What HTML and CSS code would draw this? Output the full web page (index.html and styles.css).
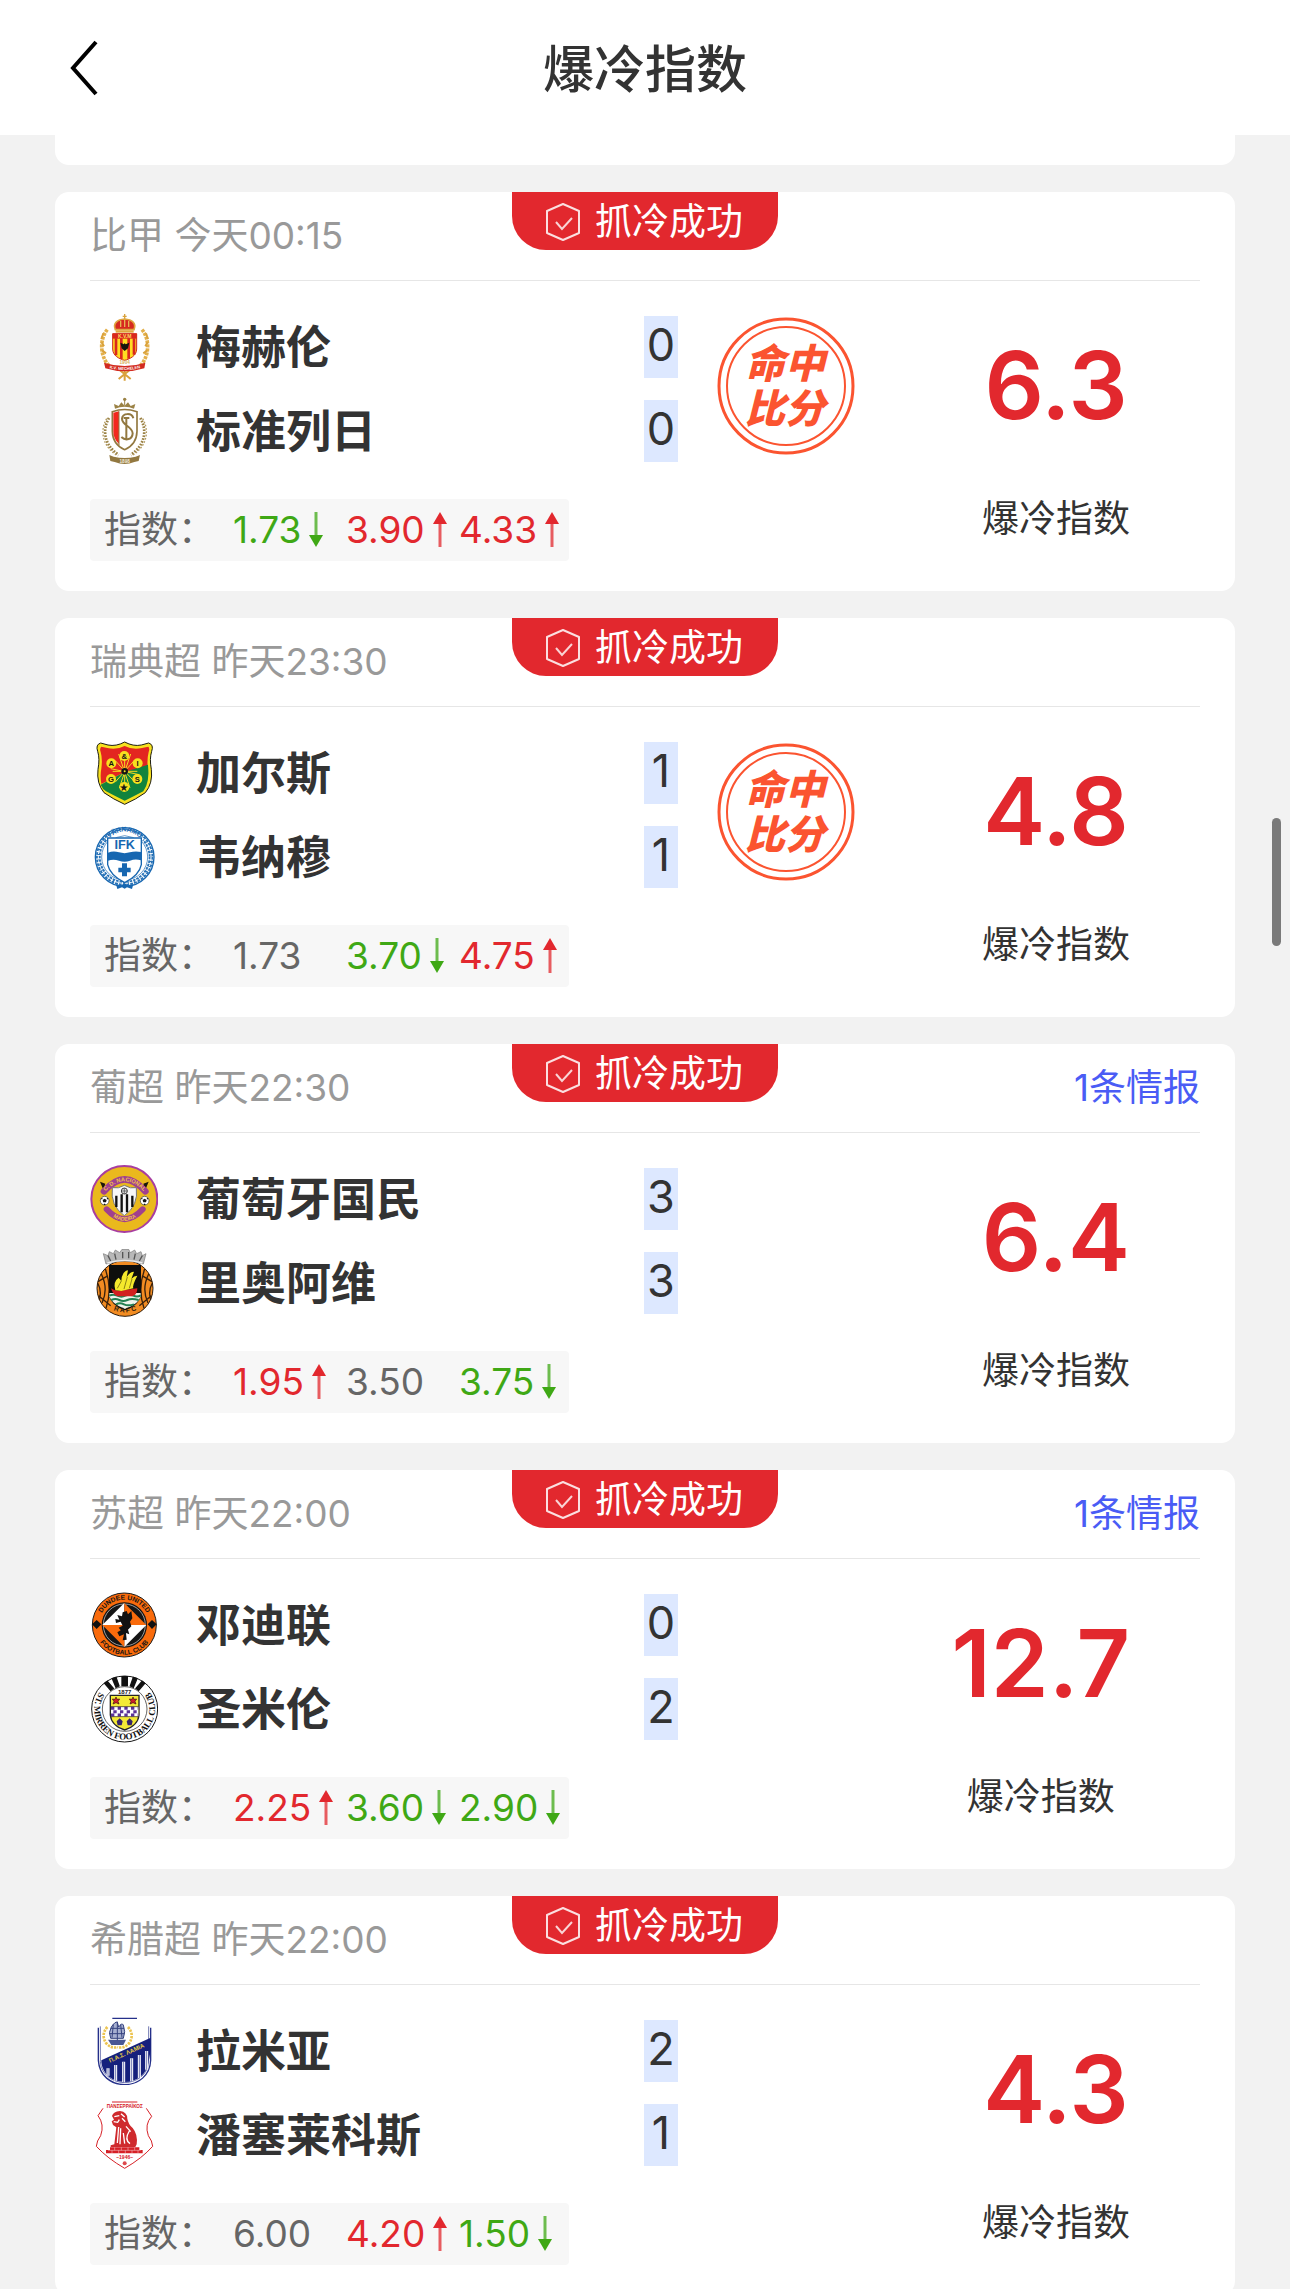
FILE: index.html
```html
<!DOCTYPE html>
<html lang="zh-CN">
<head>
<meta charset="utf-8">
<meta name="viewport" content="width=device-width, initial-scale=1">
<title>爆冷指数</title>
<link rel="stylesheet" href="styles.css">
</head>
<body>
<svg class="sprite" aria-hidden="true">
  <symbol id="shield-check" viewBox="0 0 36 40">
    <path d="M18 2 34 9V31L18 38 2 31V9Z" fill="none" stroke="#fff" stroke-opacity=".85" stroke-width="2" stroke-linejoin="round"/>
    <path d="M11 20 17 27 27 16" fill="none" stroke="#fff" stroke-opacity=".8" stroke-width="2"/>
  </symbol>
  <symbol id="arrow-up" viewBox="0 0 16 36">
    <path d="M8 10V35" stroke="#e2282e" stroke-opacity=".75" stroke-width="3"/><path d="M8 0 15 12H1Z" fill="#e2282e"/>
  </symbol>
  <symbol id="arrow-down" viewBox="0 0 16 36">
    <path d="M8 0V26" stroke="#3fa815" stroke-opacity=".75" stroke-width="3"/><path d="M8 35 15 23H1Z" fill="#3fa815"/>
  </symbol>
  <symbol id="stamp" viewBox="0 0 138 138">
    <circle cx="69" cy="69" r="67" fill="none" stroke="#fb5430" stroke-width="3"/>
    <circle cx="69" cy="69" r="59" fill="none" stroke="#fb5430" stroke-width="2"/>
    <text class="stamp-text" x="68" y="61">命中</text>
    <text class="stamp-text" x="68" y="106">比分</text>
  </symbol>
</svg>

<header class="topbar">
  <button class="back" type="button" aria-label="返回">
    <svg width="32" height="56" viewBox="0 0 32 56"><path d="M28 2 5 28 28 54" fill="none" stroke="#000" stroke-width="4"/></svg>
  </button>
  <h1 class="title">爆冷指数</h1>
</header>

<main class="list">
  <div class="card card-tail"></div>

  <article class="card">
    <div class="card-head"><span>比甲 今天00:15</span></div>
    <div class="badge"><svg width="36" height="40"><use href="#shield-check"/></svg>抓冷成功</div>
    <div class="card-body">
      <div class="match">
        <div class="team">
          <svg class="logo" viewBox="30 42 204 204">
            <g fill="none" stroke="#e3b04b" stroke-width="11" stroke-dasharray="9 3"><path d="M82 92C58 120 58 175 92 205"/><path d="M186 92C210 120 210 175 176 205"/></g>
            <path d="M70 103 64 120M65 130 72 142M66 154 78 163M198 103 204 120M203 130 196 142M202 154 190 163" stroke="#d9a23c" stroke-width="6"/>
            <path d="M116 240 150 212M152 240 118 212M134 214V245" stroke="#d9a23c" stroke-width="6"/>
            <path d="M134 45V62M128 52H140" stroke="#d9a23c" stroke-width="4"/>
            <path d="M106 92C98 72 112 62 134 60C156 62 170 72 162 92Z" fill="#d62a1f" stroke="#dfa640" stroke-width="5"/>
            <path d="M122 66V84M134 62V84M146 66V84" stroke="#e8b552" stroke-width="4"/>
            <path d="M107 94H161V101H107Z" fill="#e0a840"/>
            <path d="M98 104H170V150C170 170 150 180 134 184C118 180 98 170 98 150Z" fill="#ffdd22" stroke="#cf2b20" stroke-width="3"/>
            <path d="M108 118V169M124 118V180M146 118V179M162 118V167" stroke="#d9281e" stroke-width="8"/>
            <path d="M98 104H170V119H98Z" fill="#d9281e"/><text class="tiny" x="134" y="117" font-size="15" fill="#ffdf60">K.V.M</text>
            <path d="M121 131 132 136 134 132 137 136 148 131 144 148 134 156 125 148Z" fill="#16150f"/>
            <text class="tiny" x="134" y="195" font-size="14" fill="#d8b060">1904</text>
            <path d="M72 191Q134 211 196 191L193 208Q134 226 76 208Z" fill="#d22b20"/>
            <path id="mechBand" d="M75 204Q134 222 194 204" fill="none"/><text class="tiny" font-size="12" fill="#fff"><textPath href="#mechBand" startOffset="50%">K.V. MECHELEN</textPath></text>
          </svg>
          <h2 class="name">梅赫伦</h2><span class="score">0</span>
        </div>
        <div class="team">
          <svg class="logo" viewBox="30 297 204 204">
            <g fill="none" stroke="#9b8245" stroke-width="8" stroke-dasharray="5 4"><path d="M87 360C64 400 76 445 116 470"/><path d="M181 360C204 400 192 445 152 470"/></g>
            <g fill="none" stroke="#b29a60" stroke-width="4" stroke-dasharray="5 5"><path d="M80 362C56 404 72 450 114 474"/><path d="M188 362C212 404 196 450 154 474"/></g>
            <path d="M97 341Q134 328 171 341V400Q170 440 134 455Q98 440 97 400Z" fill="#fff" stroke="#927840" stroke-width="5"/>
            <path d="M100 344 117 340V438Q100 424 100 400Z" fill="#f3281e"/>
            <path d="M117 340V442" stroke="#927840" stroke-width="3"/>
            <path d="M160 361C156 344 128 344 126 362C126 382 158 386 158 406C157 424 138 430 124 417M139 358V422M131 360H148" fill="none" stroke="#927840" stroke-width="6"/>
            <path d="M105 332 102 318 116 324 124 313 134 323 144 313 152 324 166 318 162 332Q134 321 105 332Z" fill="#9b8245"/><circle cx="134" cy="304" r="5" fill="#9b8245"/><path d="M134 306V323" stroke="#9b8245" stroke-width="3"/>
            <path d="M88 471 101 476Q134 484 167 476L180 471 176 489 163 492Q134 504 104 492L91 489Z" fill="#927840"/>
            <text class="tiny" x="134" y="496" font-size="14" fill="#f4edda">1898</text>
          </svg>
          <h2 class="name">标准列日</h2><span class="score">0</span>
        </div>
        <dl class="odds"><dt>指数：</dt>
          <dd class="down">1.73<svg width="16" height="36"><use href="#arrow-down"/></svg></dd>
          <dd class="up">3.90<svg width="16" height="36"><use href="#arrow-up"/></svg></dd>
          <dd class="up">4.33<svg width="16" height="36"><use href="#arrow-up"/></svg></dd></dl>
      </div>
      <svg class="stamp" role="img" aria-label="命中比分"><use href="#stamp"/></svg>
      <div class="rating"><strong>6.3</strong><span>爆冷指数</span></div>
    </div>
  </article>

  <article class="card">
    <div class="card-head"><span>瑞典超 昨天23:30</span></div>
    <div class="badge"><svg width="36" height="40"><use href="#shield-check"/></svg>抓冷成功</div>
    <div class="card-body">
      <div class="match">
        <div class="team">
          <svg class="logo" viewBox="30 31 204 204">
            <path d="M134 40Q160 54 184 49L206 43Q222 48 215 68Q208 90 214 122Q219 164 196 192Q168 212 134 227Q100 212 72 192Q49 164 54 122Q60 90 53 68Q46 48 62 43L84 49Q108 54 134 40Z" fill="#f7e11f" stroke="#1c1c10" stroke-width="3"/>
            <path d="M134 52Q160 65 186 58L205 54Q210 60 206 70Q200 94 204 124L134 130 64 166Q60 140 64 120Q68 90 62 70Q58 60 64 54L82 58Q108 65 134 52Z" fill="#e32620"/>
            <path d="M204 108L134 130 62 168Q68 182 78 188Q108 204 134 216Q160 204 190 188Q210 160 204 108Z" fill="#11833d"/>
            <path d="M134 94V170M98 128H172M106 96 164 160M164 94 106 160M92 120 178 138M116 76 150 178M152 76 118 178" stroke="#f3d822" stroke-width="3"/>
            <g fill="#f7e11f"><circle cx="133" cy="82" r="15"/><circle cx="94" cy="104" r="15"/><circle cx="173" cy="104" r="15"/><circle cx="93" cy="151" r="15"/><circle cx="172" cy="151" r="15"/><circle cx="133" cy="175" r="15"/></g>
            <circle cx="134" cy="128" r="10" fill="#151515"/><circle cx="134" cy="128" r="3" fill="#f7e11f"/>
            <g class="tiny" font-size="23" fill="#151515"><text x="133" y="91">&amp;</text><text x="94" y="112">A</text><text x="173" y="112">I</text><text x="93" y="159">G</text><text x="172" y="159">S</text><text x="133" y="184">★</text></g>
          </svg>
          <h2 class="name">加尔斯</h2><span class="score">1</span>
        </div>
        <div class="team">
          <svg class="logo" viewBox="30 283 204 204">
            <circle cx="134" cy="385" r="88" fill="#fff" stroke="#1767b1" stroke-width="4"/><circle cx="134" cy="385" r="79" fill="none" stroke="#2a74b8" stroke-width="14" stroke-dasharray="8 3"/><circle cx="134" cy="385" r="79" fill="none" stroke="#fff" stroke-width="3" stroke-dasharray="12 4"/><circle cx="134" cy="385" r="69" fill="none" stroke="#1767b1" stroke-width="2"/>
            <path d="M74 330Q134 275 194 330L182 342Q134 300 86 342Z" fill="#fff" stroke="#1767b1" stroke-width="2"/>
            <path id="varnArc" d="M79 336Q134 281 189 336" fill="none"/><text class="tiny" font-size="20" fill="#1767b1"><textPath href="#varnArc" startOffset="50%">VÄRNAMO</textPath></text>
            <path d="M83 328H184V408Q178 440 134 462Q90 440 83 408Z" fill="#fff" stroke="#1767b1" stroke-width="4"/>
            <text class="tiny" x="134" y="361" font-size="38" fill="#1767b1">IFK</text>
            <path d="M84 372Q100 366 117 371T150 371T183 370V395Q166 390 150 396T117 396T84 396Z" fill="#1767b1"/>
            <path d="M126 404H141V417H152V431H141V443H126V431H115V417H126Z" fill="#1767b1"/>
            <path d="M108 467 124 470 134 464 144 470 160 467 156 481 141 476 134 480 126 476 112 481Z" fill="#1767b1"/>
          </svg>
          <h2 class="name">韦纳穆</h2><span class="score">1</span>
        </div>
        <dl class="odds"><dt>指数：</dt>
          <dd>1.73</dd>
          <dd class="down">3.70<svg width="16" height="36"><use href="#arrow-down"/></svg></dd>
          <dd class="up">4.75<svg width="16" height="36"><use href="#arrow-up"/></svg></dd></dl>
      </div>
      <svg class="stamp" role="img" aria-label="命中比分"><use href="#stamp"/></svg>
      <div class="rating"><strong>4.8</strong><span>爆冷指数</span></div>
    </div>
  </article>

  <article class="card">
    <div class="card-head"><span>葡超 昨天22:30</span><a href="#intel-nacional">1条情报</a></div>
    <div class="badge"><svg width="36" height="40"><use href="#shield-check"/></svg>抓冷成功</div>
    <div class="card-body">
      <div class="match">
        <div class="team">
          <svg class="logo" viewBox="30 48 204 204">
            <circle cx="133" cy="150" r="99" fill="#eab91d" stroke="#a83da0" stroke-width="6"/>
            <path d="M82 118A60 60 0 0 1 184 118M84 186A60 60 0 0 0 182 186" fill="none" stroke="#1b160b" stroke-width="10" stroke-dasharray="9 4"/>
            <path d="M60 98 76 104 70 122ZM206 98 190 104 196 122Z" fill="#1b160b"/>
            <path d="M72 127Q134 55 196 127" fill="none" stroke="#a0408f" stroke-width="20" stroke-linecap="round"/>
            <path d="M80 181Q134 240 188 181" fill="none" stroke="#a0408f" stroke-width="18" stroke-linecap="round"/>
            <path id="nacTopText" d="M72 132Q134 62 196 132" fill="none"/><path id="nacBottomText" d="M80 187Q134 244 188 187" fill="none"/>
            <text class="tiny" font-size="17" fill="#f1c24a"><textPath href="#nacTopText" startOffset="50%">C. D. NACIONAL</textPath></text>
            <text class="tiny" font-size="16" fill="#f1c24a"><textPath href="#nacBottomText" startOffset="50%">MADEIRA</textPath></text>
            <path d="M97 116Q115 120 133 109Q151 120 169 116Q176 170 133 200Q90 170 97 116Z" fill="#f7f7f7" stroke="#777" stroke-width="3"/>
            <path d="M109 140V174M125 136V190M141 136V190M157 140V174" stroke="#111" stroke-width="7"/><circle cx="133" cy="126" r="9" fill="#ddd" stroke="#444" stroke-width="3"/><path d="M133 117V135M124 126H142" stroke="#444" stroke-width="2"/>
            <g fill="#fff" stroke="#333" stroke-width="2"><circle cx="74" cy="155" r="13"/><circle cx="194" cy="155" r="13"/></g>
            <path d="M74 149 80 153 78 160H70L68 153ZM194 149 200 153 198 160H190L188 153ZM63 148 68 146 66 152ZM85 148 80 146 82 152ZM183 148 188 146 186 152ZM205 148 200 146 202 152ZM71 168H77L74 163ZM191 168H197L194 163Z" fill="#111"/>
          </svg>
          <h2 class="name">葡萄牙国民</h2><span class="score">3</span>
        </div>
        <div class="team">
          <svg class="logo" viewBox="30 300 204 204">
            <circle cx="135" cy="418" r="84" fill="#f28c22" stroke="#2c1b0c" stroke-width="3"/>
            <path d="M76 360Q98 420 78 478M64 375Q86 420 66 462M53 402Q66 425 58 452M194 360Q172 420 192 478M206 375Q184 420 204 462M217 402Q204 425 212 452M54 398 84 380M216 398 186 380M56 440 92 470M214 440 178 470" fill="none" stroke="#3a210b" stroke-width="4"/>
            <path d="M87 348H183V440Q176 470 135 484Q94 470 87 440Z" fill="#0e0e0c"/>
            <path d="M88 432H182V442Q176 466 135 480Q96 466 88 442Z" fill="#eef4ec"/>
            <path d="M88 440Q100 434 112 440T136 440T160 440T182 439M94 453Q106 447 118 453T142 453T176 453M108 466Q120 460 132 466T162 466" fill="none" stroke="#238052" stroke-width="6"/>
            <path d="M93 418Q110 430 130 424L172 418Q172 438 156 442H112Q98 436 93 418Z" fill="#d21f20"/>
            <path d="M106 424Q98 398 116 386L124 396Q126 366 144 364L140 384Q150 368 162 368L154 390Q162 380 172 380Q156 410 160 418L124 426Z" fill="#f5e92c"/><path d="M112 418 124 396M132 420 142 384M148 418 156 390" stroke="#584d08" stroke-width="2"/>
            <path id="rioBand" d="M85 476Q135 504 185 476" fill="none"/><text class="tiny" font-size="20" fill="#2c1b0c"><textPath href="#rioBand" startOffset="50%">R A F C</textPath></text>
            <path d="M78 345 70 314 84 320 88 308 100 314 106 303 119 311 126 301H146L151 311 164 303 170 314 183 308 187 320 198 314 190 345Q134 328 78 345Z" fill="#b8b8b8" stroke="#777" stroke-width="2"/>
            <path d="M84 320 92 336M104 314 108 332M128 309V328M146 309V328M166 314 162 332M187 320 178 336" stroke="#555" stroke-width="4"/><path d="M82 342Q134 326 187 342" fill="none" stroke="#eee" stroke-width="4"/>
          </svg>
          <h2 class="name">里奥阿维</h2><span class="score">3</span>
        </div>
        <dl class="odds"><dt>指数：</dt>
          <dd class="up">1.95<svg width="16" height="36"><use href="#arrow-up"/></svg></dd>
          <dd>3.50</dd>
          <dd class="down">3.75<svg width="16" height="36"><use href="#arrow-down"/></svg></dd></dl>
      </div>
      <div class="rating"><strong>6.4</strong><span>爆冷指数</span></div>
    </div>
  </article>

  <article class="card">
    <div class="card-head"><span>苏超 昨天22:00</span><a href="#intel-dundee">1条情报</a></div>
    <div class="badge"><svg width="36" height="40"><use href="#shield-check"/></svg>抓冷成功</div>
    <div class="card-body">
      <div class="match">
        <div class="team">
          <svg class="logo" viewBox="30 34 204 204">
            <circle cx="133" cy="136" r="96" fill="#f96b0c" stroke="#1a1a1a" stroke-width="3"/>
            <circle cx="133" cy="136" r="68" fill="#151515"/><circle cx="133" cy="136" r="63" fill="none" stroke="#ddd" stroke-width="2"/>
            <path d="M133 70V136H67Z" fill="#fff"/><path d="M133 136H199L133 202Z" fill="#fff"/><path d="M67 136H133V202ZM133 70V136H199Z" fill="#f96b0c"/>
            <path d="M36 134 50 121 64 134 50 148ZM203 134 216 121 230 134 216 148Z" fill="#111"/>
            <path d="M128 98 140 94 144 104 154 94 157 116 150 126 154 140 144 150 148 164 138 160 140 180 128 182 132 164 118 170 112 158 122 152 116 144 128 138 122 126 108 130 106 118 118 120 112 106 126 110Z" fill="#111"/>
            <path id="dunTop" d="M57 136A76 76 0 0 1 209 136" fill="none"/><path id="dunBottom" d="M44 136A89 89 0 0 0 222 136" fill="none"/>
            <text class="tiny" font-size="20" fill="#151515"><textPath href="#dunTop" startOffset="50%">DUNDEE UNITED</textPath></text>
            <text class="tiny" font-size="20" fill="#151515"><textPath href="#dunBottom" startOffset="50%">FOOTBALL CLUB</textPath></text>
          </svg>
          <h2 class="name">邓迪联</h2><span class="score">0</span>
        </div>
        <div class="team">
          <svg class="logo" viewBox="30 288 204 204">
            <circle cx="134" cy="390" r="99" fill="#fff" stroke="#161616" stroke-width="3"/><circle cx="134" cy="390" r="67" fill="#fff" stroke="#161616" stroke-width="2"/>
            <path d="M74 313 82 307 100 328 92 334ZM97 299 108 295 117 321 108 325ZM126 293H142V320H126ZM160 295 171 299 160 325 151 321ZM186 307 194 313 176 334 168 328Z" fill="#111" stroke="#111" stroke-width="4"/>
            <text x="134" y="344" font-size="18" class="tiny" fill="#222">1877</text>
            <path d="M91 349H177V408Q174 440 134 453Q94 440 91 408Z" fill="#f4ea36" stroke="#252525" stroke-width="4"/>
            <path d="M93 384H175V412H93Z" fill="#fff"/><path d="M93 388H175M100 398H175M93 408H175" stroke="#5b3398" stroke-width="9" stroke-dasharray="10 10"/>
            <path d="M93 383H175M93 413H175" stroke="#2c2140" stroke-width="2"/>
            <g fill="#d01f2a" stroke="#381010" stroke-width="2"><path d="M108 354 111 361 119 360 114 367 117 375 108 371 99 375 102 367 97 360 105 361Z"/><path d="M159 354 162 361 170 360 165 367 168 375 159 371 150 375 153 367 148 360 156 361Z"/></g>
            <path d="M119 418 128 427 125 439H113L110 427ZM149 418 158 427 155 439H143L140 427Z" fill="#37256b"/>
            <path id="mirArc" d="M70 326A91 91 0 1 0 198 326" fill="none"/><text class="serif" font-size="27" fill="#111"><textPath href="#mirArc" startOffset="50%">ST. MIRREN FOOTBALL CLUB</textPath></text>
          </svg>
          <h2 class="name">圣米伦</h2><span class="score">2</span>
        </div>
        <dl class="odds"><dt>指数：</dt>
          <dd class="up">2.25<svg width="16" height="36"><use href="#arrow-up"/></svg></dd>
          <dd class="down">3.60<svg width="16" height="36"><use href="#arrow-down"/></svg></dd>
          <dd class="down">2.90<svg width="16" height="36"><use href="#arrow-down"/></svg></dd></dl>
      </div>
      <div class="rating"><strong>12.7</strong><span>爆冷指数</span></div>
    </div>
  </article>

  <article class="card">
    <div class="card-head"><span>希腊超 昨天22:00</span></div>
    <div class="badge"><svg width="36" height="40"><use href="#shield-check"/></svg>抓冷成功</div>
    <div class="card-body">
      <div class="match">
        <div class="team">
          <svg class="logo" viewBox="30 50 204 204">
            <path d="M97 54H171M55 82V180C58 226 92 252 134 253C176 252 210 226 212 180V82" fill="none" stroke="#25308a" stroke-width="4"/>
            <path d="M61 78V184C64 222 96 246 134 247C172 246 204 222 206 184V78" fill="#fff" stroke="#25308a" stroke-width="2"/>
            <path d="M64 180 212 112V150L206 184C200 222 172 244 134 245C96 244 68 222 64 186Z" fill="#15207c"/>
            <path d="M84 204V226M107 194V241M131 184V245M155 174V243M178 164V233M200 152V208" stroke="#fff" stroke-width="9"/><path d="M84 204V226M107 194V241M131 184V245M155 174V243M178 164V233M200 152V208" stroke="#25308a" stroke-width="2"/>
            <path id="lamBand" d="M75 194 215 131" fill="none"/><text class="tiny" font-size="18" fill="#ead044"><textPath href="#lamBand" startOffset="48%">Π.Α.Σ. ΛΑΜΙΑ</textPath></text>
            <path d="M82 80Q62 102 78 128Q94 146 112 140M144 80Q164 102 148 128Q132 146 112 140" fill="none" stroke="#ecc452" stroke-width="8" stroke-dasharray="7 3"/>
            <path d="M84 118H138L130 134H94Z" fill="#4a5794"/><path d="M92 114Q84 96 94 80Q106 62 112 66L116 80Q126 66 130 74Q138 94 130 114Z" fill="#a6afd0" stroke="#36437f" stroke-width="3"/><path d="M112 64V120M92 84H132M88 100H134M100 72 96 112M122 72 126 112" stroke="#36437f" stroke-width="3"/>
          </svg>
          <h2 class="name">拉米亚</h2><span class="score">2</span>
        </div>
        <div class="team">
          <svg class="logo" viewBox="30 304 204 204">
            <path d="M96 307H172M69 326 54 348Q74 374 62 408Q50 424 49 440Q82 476 134 506Q186 476 218 440Q217 424 205 408Q193 374 215 350L199 326" fill="none" stroke="#d62026" stroke-width="3"/>
            <text class="tiny" x="134" y="326" font-size="14" fill="#d62026">ΠΑΝΣΕΡΡΑΪΚΟΣ</text>
            <path d="M96 349Q100 336 120 334Q142 337 142 357Q145 374 158 385Q174 404 170 434L166 442H92V437L103 434 109 383 99 376 95 365 102 360Z" fill="#cf2a2d"/>
            <path d="M103 351 118 348M101 366 113 368 118 360M116 382 112 430M122 386 120 434M130 400 134 432M148 394Q132 420 150 432M138 380 152 396M123 342 134 352M126 356 136 366" fill="none" stroke="#fff" stroke-width="4"/>
            <path d="M90 443H178V451H188V461H78V451H90Z" fill="#d62026"/><path d="M84 452H182M104 443V452M124 443V452M144 443V452M164 443V452M96 452V461M116 452V461M136 452V461M156 452V461M174 452V461" stroke="#fff" stroke-opacity=".6" stroke-width="2"/>
            <text class="tiny" x="134" y="477" font-size="15" fill="#d62026">–1946–</text><circle cx="134" cy="491" r="6" fill="#dd4a4d"/>
          </svg>
          <h2 class="name">潘塞莱科斯</h2><span class="score">1</span>
        </div>
        <dl class="odds"><dt>指数：</dt>
          <dd>6.00</dd>
          <dd class="up">4.20<svg width="16" height="36"><use href="#arrow-up"/></svg></dd>
          <dd class="down">1.50<svg width="16" height="36"><use href="#arrow-down"/></svg></dd></dl>
      </div>
      <div class="rating"><strong>4.3</strong><span>爆冷指数</span></div>
    </div>
  </article>
</main>
<div class="scroll-thumb" aria-hidden="true"></div>
</body>
</html>
```
FILE: styles.css
```css
* { box-sizing: border-box; }

body {
  margin: 0;
  height: 100vh;
  display: flex;
  flex-direction: column;
  position: relative;
  overflow: hidden;
  background: #f2f2f2;
  color: #333;
  font-family: Inter, "Noto Sans CJK SC", sans-serif;
  font-size: 37px;
  line-height: 52px;
}

.sprite { position: absolute; width: 0; height: 0; }

.topbar {
  flex: none;
  height: 135px;
  display: grid;
  grid-template-columns: 1fr auto 1fr;
  align-items: center;
  padding: 0 68px;
  background: #fff;
}

.back {
  justify-self: start;
  display: flex;
  padding: 0;
  border: 0;
  background: none;
}

.title {
  margin: 0;
  padding-top: 4px;
  font-size: 51px;
  line-height: 72px;
  font-weight: 500;
}

.list {
  flex: 1;
  min-height: 0;
  overflow-y: auto;
  scrollbar-width: none;
  padding: 0 55px;
}

.card {
  position: relative;
  margin-bottom: 27px;
  padding: 0 35px 30px;
  border-radius: 14px;
  background: #fff;
}

.card-tail { border-radius: 0 0 14px 14px; }

.card-head {
  height: 89px;
  display: flex;
  align-items: center;
  justify-content: space-between;
  border-bottom: 1px solid #e6e6e6;
  color: #999;
}

.card-head a { color: #4a5cf5; text-decoration: none; }

.badge {
  position: absolute;
  top: 0;
  left: 50%;
  transform: translateX(-50%);
  width: 266px;
  height: 58px;
  display: flex;
  align-items: center;
  padding: 2px 0 0 33px;
  gap: 14px;
  border-radius: 0 0 34px 34px;
  background: #e2282e;
  color: #fff;
}

.card-body { display: flex; padding-top: 32px; }

.match {
  flex: 0 1 588px;
  display: flex;
  flex-direction: column;
  gap: 16px;
}

.team { display: flex; align-items: center; }

.logo { width: 68px; height: 68px; margin-right: 38px; }

.name {
  margin: 0;
  padding-top: 2px;
  font-size: 45px;
  line-height: 64px;
  font-weight: 700;
}

.score {
  width: 34px;
  height: 62px;
  margin-left: auto;
  background: #dde8ff;
  font-size: 45px;
  line-height: 58px;
  text-align: center;
}

.odds {
  width: 479px;
  height: 62px;
  margin: 18px 0 0;
  padding-left: 14px;
  display: flex;
  align-items: center;
  border-radius: 4px;
  background: #f7f7f7;
  color: #666;
}

.odds dt { flex: none; width: 129px; }

.odds dd {
  flex: none;
  width: 113px;
  margin: 0;
  display: flex;
  align-items: center;
  gap: 7px;
}

.odds dd:last-child { width: auto; }

.odds svg { flex: none; }

.up { color: #e2282e; }
.down { color: #3fa815; }

.stamp { width: 138px; height: 138px; margin: 4px 0 0 39px; }

.stamp-text {
  fill: #fb5430;
  font-size: 40px;
  font-weight: 900;
  font-style: italic;
  text-anchor: middle;
}

.rating {
  margin-left: auto;
  padding: 16px 70px 0 0;
  display: flex;
  flex-direction: column;
  align-items: center;
  gap: 52px;
}

.rating strong {
  color: #e2282e;
  font-size: 93px;
  line-height: 112px;
  font-weight: 600;
}

.tiny { font-family: "Liberation Sans", sans-serif; font-weight: 700; text-anchor: middle; }
.serif { font-family: "Liberation Serif", serif; font-weight: 700; text-anchor: middle; }

.scroll-thumb {
  position: absolute;
  right: 9px;
  top: 818px;
  width: 9px;
  height: 128px;
  border-radius: 5px;
  background: #7a7a7a;
}
```
